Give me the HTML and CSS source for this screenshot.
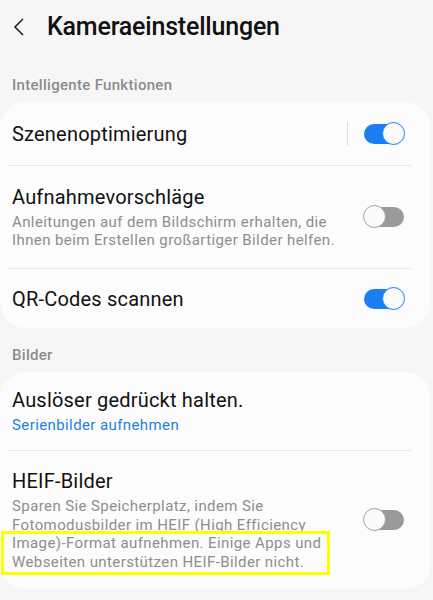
FILE: index.html
```html
<!DOCTYPE html>
<html lang="de">

<head>
    <meta charset="UTF-8">
    <meta name="viewport" content="width=device-width, initial-scale=1.0">
    <link rel="stylesheet" href="styles.css">
    <title>Kameraeinstellungen</title>
</head>

<body>
    <header class="topbar">
        <svg class="back" width="12" height="18" viewBox="0 0 12 18">
            <path d="M10 1 L2 9 L10 17" fill="none" stroke="#222" stroke-width="1.6" />
        </svg>
        <h1>Kameraeinstellungen</h1>
    </header>

    <div class="section-label">Intelligente Funktionen</div>
    <div class="card">
        <div class="row row-single">
            <div class="row-text">
                <div class="title">Szenenoptimierung</div>
            </div>
            <span class="vline"></span>
            <span class="toggle on"><span class="knob"></span></span>
        </div>
        <div class="divider"></div>
        <div class="row row-desc">
            <div class="row-text">
                <div class="title">Aufnahmevorschläge</div>
                <div class="sub">Anleitungen auf dem Bildschirm erhalten, die Ihnen beim Erstellen großartiger Bilder helfen.</div>
            </div>
            <span class="toggle"><span class="knob"></span></span>
        </div>
        <div class="divider"></div>
        <div class="row row-last">
            <div class="row-text">
                <div class="title">QR-Codes scannen</div>
            </div>
            <span class="toggle on"><span class="knob"></span></span>
        </div>
    </div>

    <div class="section-label second">Bilder</div>
    <div class="card">
        <div class="row row-link">
            <div class="row-text">
                <div class="title">Auslöser gedrückt halten.</div>
                <div class="sub link">Serienbilder aufnehmen</div>
            </div>
        </div>
        <div class="divider"></div>
        <div class="row row-heif">
            <div class="row-text">
                <div class="title">HEIF-Bilder</div>
                <div class="sub">Sparen Sie Speicherplatz, indem Sie Fotomodusbilder im HEIF (High Efficiency Image)-Format aufnehmen. Einige Apps und Webseiten unterstützen HEIF-Bilder nicht.</div>
            </div>
            <span class="toggle"><span class="knob"></span></span>
        </div>
    </div>

    <div class="highlight"></div>
</body>

</html>
```

FILE: styles.css
```css
body {
    font-family: 'Roboto', 'Noto Sans', sans-serif;
    margin: 0;
    padding: 0;
    background-color: #f6f6f6;
    color: #111;
    position: relative;
    height: 600px;
    overflow: hidden;
}

.topbar {
    display: flex;
    align-items: center;
    height: 53px;
    padding-left: 13px;
}

.back {
    margin-top: 1px;
}

.topbar h1 {
    margin: 0 0 0 22px;
    font-size: 25px;
    font-weight: 500;
    letter-spacing: -0.2px;
}

.section-label {
    font-size: 15px;
    line-height: 17px;
    letter-spacing: 0.3px;
    font-weight: 500;
    color: #8c8c8c;
    padding: 24px 12px 8px;
}

.section-label.second {
    padding-top: 19px;
}

.card {
    background-color: #fcfcfc;
    border-radius: 26px;
    margin-right: 2px;
}

.row {
    display: flex;
    align-items: center;
    padding: 0 26px 0 12px;
}

.row-text {
    flex: 1;
    padding-right: 20px;
}

.row-single {
    height: 63px;
}

.row-desc {
    height: 102px;
}

.row-last {
    height: 59px;
}

.row-link {
    height: 78px;
}

.row-heif {
    height: 138px;
}

.title {
    font-size: 20px;
    line-height: 24px;
    letter-spacing: 0.2px;
}

.sub {
    font-size: 15px;
    line-height: 18.5px;
    letter-spacing: 0.4px;
    color: #8e8e8e;
    margin-top: 4px;
}

.sub.link {
    color: #1f7fe0;
}

.divider {
    height: 1px;
    background-color: #e6e6e6;
    margin: 0 20px 0 7px;
}

.vline {
    width: 1px;
    height: 24px;
    background-color: #dcdcdc;
    margin-right: 15px;
}

.toggle {
    position: relative;
    display: inline-block;
    width: 42px;
    height: 24px;
    flex-shrink: 0;
}

.toggle::before {
    content: '';
    position: absolute;
    left: 1px;
    right: 1px;
    top: 2px;
    height: 20px;
    border-radius: 10px;
    background-color: #9a9a9a;
}

.toggle.on::before {
    background-color: #1a7ef5;
}

.knob {
    position: absolute;
    top: 0;
    left: 0;
    width: 21px;
    height: 21px;
    border-radius: 50%;
    background-color: #fafafa;
    border: 1.5px solid #a0a0a0;
}

.toggle.on .knob {
    left: auto;
    right: 0;
    border-color: #1a7ef5;
}

.highlight {
    position: absolute;
    left: 1px;
    top: 531px;
    width: 323px;
    height: 38px;
    border: 3px solid #ffff00;
}
```
